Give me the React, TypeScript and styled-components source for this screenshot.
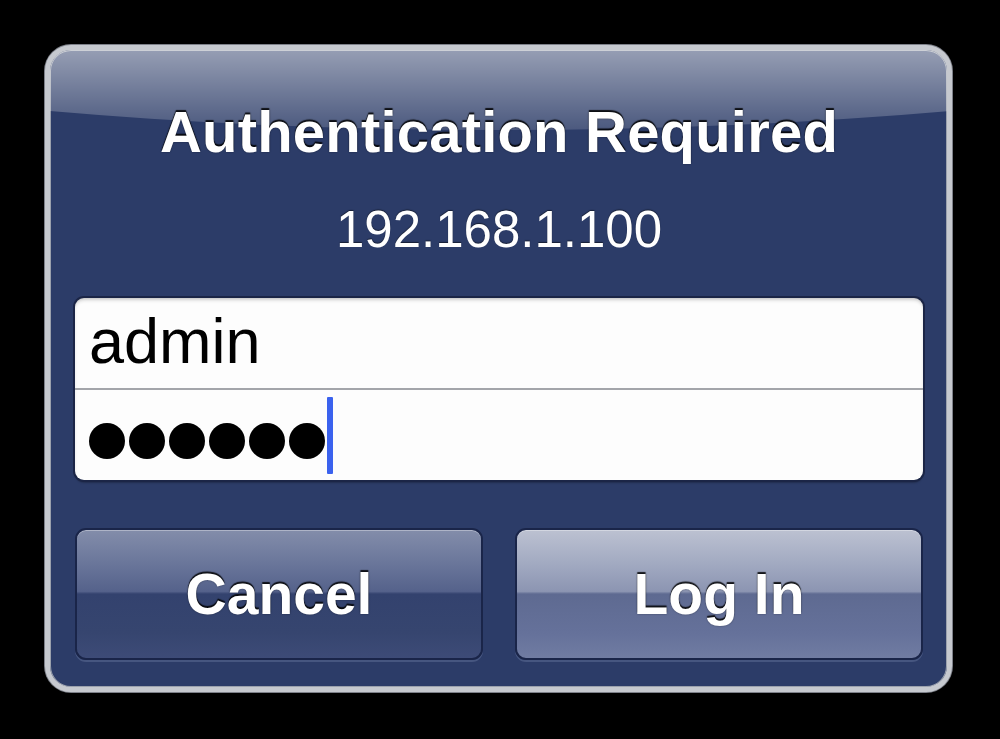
import React from "react";
import styled, { createGlobalStyle } from "styled-components";

const GlobalStyle = createGlobalStyle`
  html, body {
    margin: 0;
    padding: 0;
    background: #000;
  }
  body {
    font-family: "Liberation Sans", Arial, Helvetica, sans-serif;
  }
`;

const Screen = styled.div`
  width: 1000px;
  height: 739px;
  padding: 45px 0 0 45px;
  box-sizing: border-box;
  background: #000;
`;

const AlertBox = styled.div`
  position: relative;
  width: 907px;
  height: 647px;
  box-sizing: border-box;
  border: 5px solid #c6c9cf;
  border-radius: 26px;
  background: #2c3c68;
  box-shadow: 0 0 0 1px #7d8089, inset 0 0 0 1px #9ba1ad;
  overflow: hidden;
  display: flex;
  flex-direction: column;
  align-items: stretch;
  padding: 49px 24px 27px 25px;

  /* glossy highlight across the top of the alert */
  &::before {
    content: "";
    position: absolute;
    left: 50%;
    top: -440px;
    width: 2400px;
    height: 520px;
    margin-left: -1200px;
    border-radius: 50%;
    background: linear-gradient(
      to bottom,
      rgba(255, 255, 255, 0.5) 440px,
      rgba(255, 255, 255, 0.15) 520px
    );
    pointer-events: none;
  }
`;

const Title = styled.h1`
  position: relative;
  margin: 0;
  font-size: 58px;
  line-height: 66px;
  font-weight: 700;
  color: #fff;
  text-align: center;
  letter-spacing: 0.2px;
  text-shadow: 0 -2px 1px rgba(0, 0, 0, 0.85), 0 0 2px rgba(0, 0, 0, 0.4);
`;

const Host = styled.div`
  margin-top: 35px;
  font-size: 51px;
  line-height: 60px;
  color: #fff;
  text-align: center;
  text-shadow: 0 -1px 1px rgba(0, 0, 0, 0.5);
`;

const Fields = styled.div`
  margin-top: 38px;
  height: 182px;
  border-radius: 9px;
  background: #fdfdfd;
  box-shadow: 0 0 0 2px #1b2546, 0 3px 2px rgba(0, 0, 0, 0.25),
    inset 0 3px 4px -2px rgba(0, 0, 0, 0.3);
  display: flex;
  flex-direction: column;
  overflow: hidden;
`;

const FieldRow = styled.div<{ $divider?: boolean }>`
  flex: 1;
  display: flex;
  align-items: center;
  padding-left: 14px;
  border-bottom: ${(p) => (p.$divider ? "2px solid #a3a5aa" : "none")};
`;

const FieldText = styled.span`
  font-size: 63px;
  line-height: 63px;
  color: #000;
  margin-top: -4px;
`;

const Dot = styled.span`
  display: inline-block;
  width: 36px;
  height: 36px;
  border-radius: 50%;
  background: #000;
  margin-right: 4px;
  margin-top: 12px;
`;

const Caret = styled.span`
  display: inline-block;
  width: 6px;
  height: 77px;
  margin-left: -2px;
  border-radius: 1px;
  background: #3b62ee;
`;

const Buttons = styled.div`
  margin-top: 48px;
  display: grid;
  grid-template-columns: 1fr 1fr;
  gap: 32px;
`;

const Button = styled.button<{ $primary?: boolean }>`
  height: 132px;
  border: 2px solid #1a2549;
  border-radius: 11px;
  padding: 0;
  font-family: inherit;
  font-size: 57px;
  font-weight: 700;
  color: #fff;
  text-shadow: 0 -2px 1px rgba(0, 0, 0, 0.85), 0 0 2px rgba(0, 0, 0, 0.4);
  box-shadow: inset 0 1px 0 rgba(255, 255, 255, 0.35),
    0 2px 0 rgba(120, 135, 175, 0.35);
  background: ${(p) =>
    p.$primary
      ? "linear-gradient(to bottom, #bcc1d1 0%, #a3abc2 25%, #8c95b2 48%, #5e6a91 50%, #65719a 80%, #707ca2 100%)"
      : "linear-gradient(to bottom, #838daa 0%, #6b779b 25%, #55628b 48%, #33426e 50%, #36456f 80%, #3d4b77 100%)"};
`;

export default function App() {
  return (
    <>
      <GlobalStyle />
      <Screen>
        <AlertBox>
          <Title>Authentication Required</Title>
          <Host>192.168.1.100</Host>
          <Fields>
            <FieldRow $divider>
              <FieldText>admin</FieldText>
            </FieldRow>
            <FieldRow>
              {Array.from({ length: 6 }).map((_, i) => (
                <Dot key={i} />
              ))}
              <Caret />
            </FieldRow>
          </Fields>
          <Buttons>
            <Button>Cancel</Button>
            <Button $primary>Log In</Button>
          </Buttons>
        </AlertBox>
      </Screen>
    </>
  );
}
